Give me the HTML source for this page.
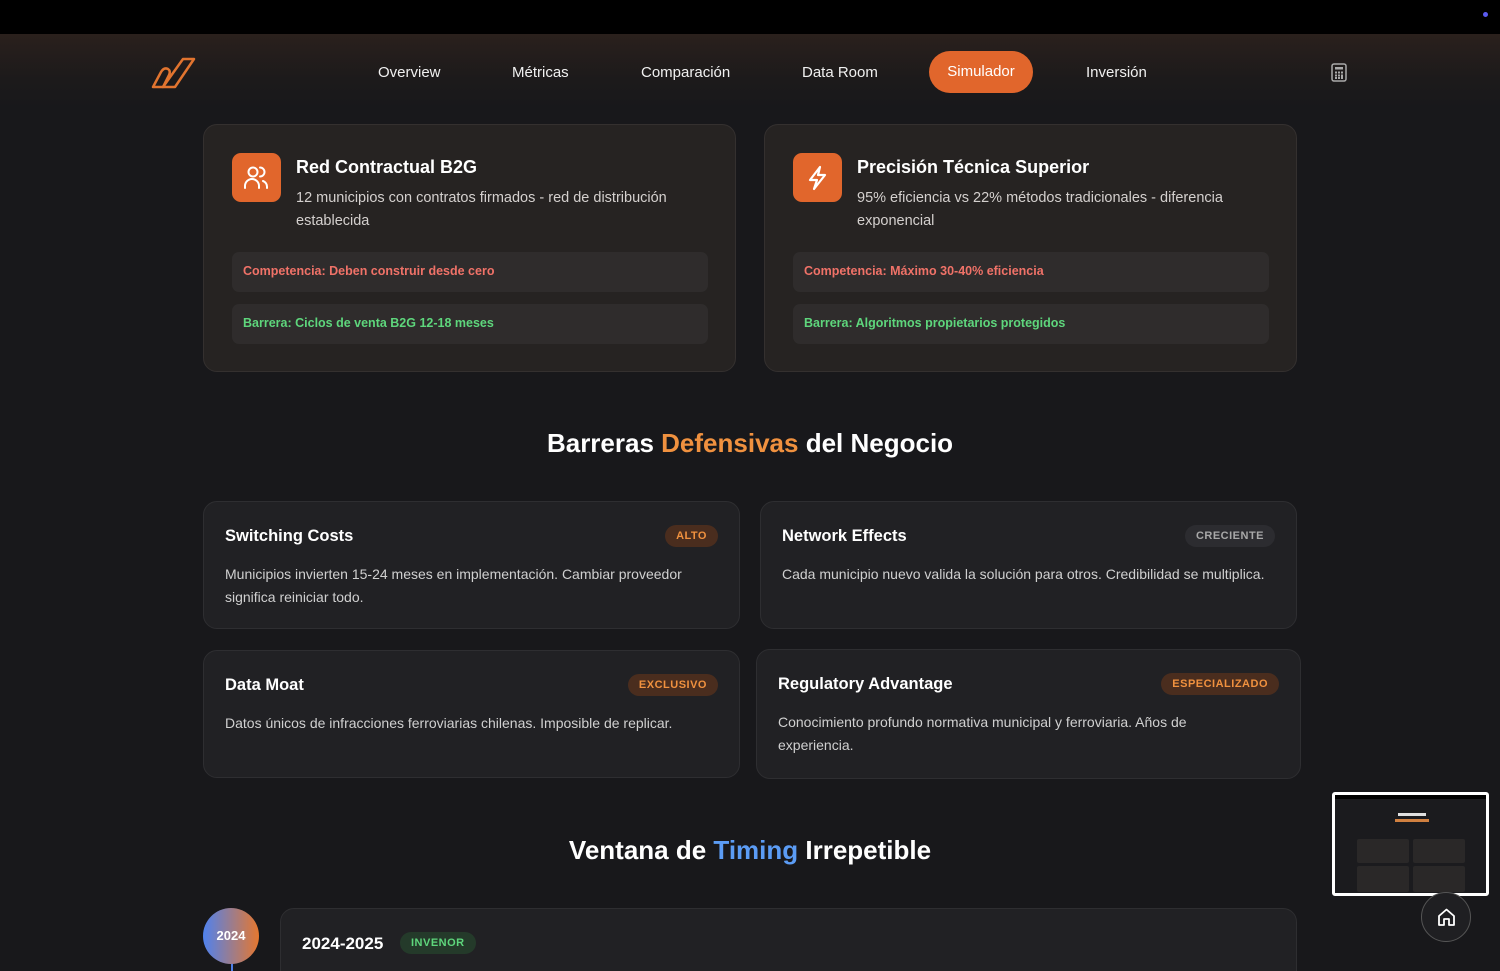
<!DOCTYPE html>
<html><head><meta charset="utf-8"><style>
*{box-sizing:border-box;margin:0;padding:0}
html,body{width:1500px;height:971px;overflow:hidden}
body{background:#18181b;font-family:"Liberation Sans",sans-serif;color:#fff;position:relative}
.top{position:absolute;left:0;top:0;width:1500px;height:34px;background:#000}
.dot{position:absolute;right:12px;top:12px;width:5px;height:5px;border-radius:50%;background:#5b5bf0}
.nav{position:absolute;top:34px;left:0;width:1500px;height:76px;background:linear-gradient(180deg,#2a201c 0%,#1c1a1b 60%,#18181b 100%)}
.nav a{position:absolute;top:30px;font-size:15px;color:#f0f0f0}
.sim{position:absolute;left:929px;top:17px;width:104px;height:42px;border-radius:21px;background:#e1662c;color:#fff;font-size:15px;text-align:center;line-height:42px}
.card{position:absolute;background:#262322;border:1px solid #34302f;border-radius:14px}
.ic{position:absolute;left:28px;top:28px;width:49px;height:49px;border-radius:9px;background:#e1662c}
.ct{position:absolute;left:92px;top:32px;font-size:18px;font-weight:bold}
.cd{position:absolute;left:92px;top:62px;width:400px;font-size:14.5px;line-height:23px;color:#d4d0ce}
.row{position:absolute;left:28px;width:476px;height:40px;border-radius:7px;background:#2f2c2c;font-size:12.5px;font-weight:bold;line-height:38px;padding-left:11px}
.red{color:#f07268}.grn{color:#5ed67c}
h2{position:absolute;width:1500px;text-align:center;font-size:26px;font-weight:bold}
.b{position:absolute;background:#212124;border:1px solid #2e2e31;border-radius:14px}
.bt{position:absolute;left:21px;top:25px;font-size:16.5px;font-weight:bold}
.bd{position:absolute;left:21px;top:61px;width:500px;font-size:14px;line-height:23px;color:#d0d0d0}
.tag{position:absolute;right:21px;top:23px;height:22px;border-radius:11px;font-size:11px;font-weight:bold;line-height:22px;padding:0 11px;letter-spacing:.5px;background:#4a2d1e;color:#f0913f}
</style></head><body>
<div class="top"><div class="dot"></div></div>
<div class="nav">
<svg style="position:absolute;left:150px;top:22px" width="48" height="34" viewBox="0 0 48 34"><path d="M3 31 L11 16 Q14 11 18 13 Q21 15 19 19 L13 31 Z" fill="none" stroke="#e1742f" stroke-width="2.5" stroke-linejoin="round"/><path d="M13 31 L33 3 L44 3 L25 31 Z" fill="none" stroke="#e1742f" stroke-width="2.5" stroke-linejoin="round"/></svg>
<a style="left:378px">Overview</a><a style="left:512px">Métricas</a><a style="left:641px">Comparación</a><a style="left:802px">Data Room</a>
<div class="sim">Simulador</div><a style="left:1086px">Inversión</a>
<svg style="position:absolute;left:1331px;top:29px" width="16" height="19" viewBox="0 0 16 19"><rect x="1" y="1" width="14" height="17" rx="2" fill="none" stroke="#aaa" stroke-width="1.5"/><rect x="4" y="4" width="8" height="2.5" fill="#aaa"/><g fill="#aaa"><rect x="4" y="8.5" width="2" height="2"/><rect x="7" y="8.5" width="2" height="2"/><rect x="10" y="8.5" width="2" height="2"/><rect x="4" y="11.5" width="2" height="2"/><rect x="7" y="11.5" width="2" height="2"/><rect x="4" y="14" width="2" height="2"/><rect x="7" y="14" width="2" height="2"/><rect x="10" y="11.5" width="2" height="4.5"/></g></svg>
</div>

<div class="card" style="left:203px;top:124px;width:533px;height:248px">
<div class="ic"><svg width="49" height="49" viewBox="0 0 49 49" fill="none" stroke="#fff" stroke-width="2" stroke-linecap="round"><circle cx="21" cy="19" r="4.5"/><path d="M13 35v-2a7 7 0 0 1 14 0v2M28 14.5a4.5 4.5 0 0 1 0 9M31 28a6 6 0 0 1 4 6v1"/></svg></div>
<div class="ct">Red Contractual B2G</div>
<div class="cd">12 municipios con contratos firmados - red de distribución establecida</div>
<div class="row red" style="top:127px">Competencia: Deben construir desde cero</div>
<div class="row grn" style="top:179px">Barrera: Ciclos de venta B2G 12-18 meses</div>
</div>
<div class="card" style="left:764px;top:124px;width:533px;height:248px">
<div class="ic"><svg width="49" height="49" viewBox="0 0 49 49" fill="none" stroke="#fff" stroke-width="2.2" stroke-linejoin="round"><path d="M27 14 L17 27 H24 L21 36 L32 22 H25 Z"/></svg></div>
<div class="ct">Precisión Técnica Superior</div>
<div class="cd">95% eficiencia vs 22% métodos tradicionales - diferencia exponencial</div>
<div class="row red" style="top:127px">Competencia: Máximo 30-40% eficiencia</div>
<div class="row grn" style="top:179px">Barrera: Algoritmos propietarios protegidos</div>
</div>

<h2 style="top:428px">Barreras <span style="color:#f0913f">Defensivas</span> del Negocio</h2>

<div class="b" style="left:203px;top:501px;width:537px;height:128px"><div class="bt">Switching Costs</div><div class="tag">ALTO</div><div class="bd">Municipios invierten 15-24 meses en implementación. Cambiar proveedor significa reiniciar todo.</div></div>
<div class="b" style="left:760px;top:501px;width:537px;height:128px"><div class="bt">Network Effects</div><div class="tag" style="background:#2c2c30;color:#a8a8a8">CRECIENTE</div><div class="bd" style="width:510px">Cada municipio nuevo valida la solución para otros. Credibilidad se multiplica.</div></div>
<div class="b" style="left:203px;top:650px;width:537px;height:128px"><div class="bt">Data Moat</div><div class="tag">EXCLUSIVO</div><div class="bd">Datos únicos de infracciones ferroviarias chilenas. Imposible de replicar.</div></div>
<div class="b" style="left:756px;top:649px;width:545px;height:130px"><div class="bt">Regulatory Advantage</div><div class="tag">ESPECIALIZADO</div><div class="bd" style="width:460px">Conocimiento profundo normativa municipal y ferroviaria. Años de experiencia.</div></div>

<h2 style="top:835px">Ventana de <span style="color:#5b9cf5">Timing</span> Irrepetible</h2>

<div style="position:absolute;left:231px;top:960px;width:2px;height:11px;background:#4d7ee8"></div>
<div style="position:absolute;left:203px;top:908px;width:56px;height:56px;border-radius:50%;background:linear-gradient(90deg,#4f82ef,#e5772f);font-size:13px;font-weight:bold;text-align:center;line-height:56px">2024</div>
<div class="b" style="left:280px;top:908px;width:1017px;height:80px"><div style="position:absolute;left:21px;top:25px;font-size:17px;font-weight:bold">2024-2025</div><div style="position:absolute;left:119px;top:23px;height:22px;border-radius:11px;background:#243a2a;color:#5ed67c;font-size:11px;font-weight:bold;line-height:22px;padding:0 11px;letter-spacing:.5px">INVENOR</div></div>

<div style="position:absolute;left:1332px;top:792px;width:157px;height:104px;border:3px solid #fff;border-radius:3px;background:#1b1b1e;overflow:hidden">
<div style="height:4px;background:#000"></div>
<div style="position:absolute;left:63px;top:18px;width:28px;height:3px;background:#e0e0e0"></div>
<div style="position:absolute;left:60px;top:24px;width:34px;height:3px;background:#d08040"></div>
<div style="position:absolute;left:22px;top:44px;width:52px;height:24px;background:#2a2828;border-radius:2px"></div>
<div style="position:absolute;left:78px;top:44px;width:52px;height:24px;background:#2a2828;border-radius:2px"></div>
<div style="position:absolute;left:22px;top:71px;width:52px;height:26px;background:#2a2828;border-radius:2px"></div>
<div style="position:absolute;left:78px;top:71px;width:52px;height:26px;background:#2a2828;border-radius:2px"></div>
</div>
<div style="position:absolute;left:1421px;top:892px;width:50px;height:50px;border-radius:50%;background:#1f1f22;border:1px solid #555"><svg style="position:absolute;left:14px;top:14px" width="21" height="21" viewBox="0 0 21 21" fill="none" stroke="#fff" stroke-width="1.8" stroke-linejoin="round"><path d="M3 9 L10.5 2.5 L18 9 V18 H13 V12 H8 V18 H3 Z"/></svg></div>
</body></html>
